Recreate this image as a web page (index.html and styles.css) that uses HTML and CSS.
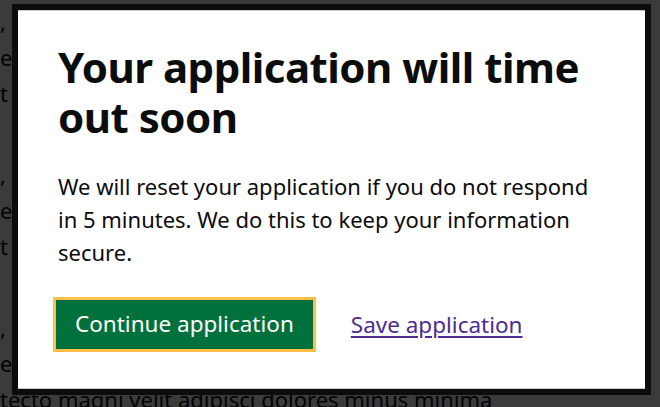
FILE: index.html
```html
<!DOCTYPE html>
<html lang="en">
<head>
<meta charset="UTF-8">
<meta name="viewport" content="width=device-width, initial-scale=1.0">
<title>Application timeout</title>
<link rel="stylesheet" href="styles.css">
</head>
<body>
<main class="page">
  <p class="page-text">, sed do eiusmod tempor incididunt ut labore et dolore<br>erat volutpat. Ut enim ad minim veniam, quis nostrud<br>t laboris nisi ut aliquip ex ea commodo consequat.</p>
  <p class="page-text">, quis autem vel eum iure reprehenderit qui in ea<br>er voluptate velit esse quam nihil molestiae<br>t illum qui dolorem eum fugiat quo voluptas nulla.</p>
  <p class="page-text">, nemo enim ipsam voluptatem quia voluptas sit<br>er aut odit aut fugit, sed quia consequuntur magni<br>tecto magni velit adipisci dolores minus minima</p>
</main>

<div class="overlay"></div>

<div class="modal" role="dialog" aria-labelledby="modal-title">
  <h1 id="modal-title" class="modal-title">Your application will time out soon</h1>
  <p class="modal-text">We will reset your application if you do not respond in 5 minutes. We do this to keep your information secure.</p>
  <div class="modal-actions">
    <button class="btn-continue">Continue application</button>
    <a href="#" class="link-save">Save application</a>
  </div>
</div>
</body>
</html>
```

FILE: styles.css
```css
body{margin:0;font-family:'Noto Sans',sans-serif;background:#fff;color:#0b0c0c;overflow:hidden;height:407px;}
.page{padding-top:3px;}
.page-text{margin:0 0 45px;font-size:22px;line-height:36px;white-space:nowrap;}
.overlay{position:fixed;inset:0;background:rgba(0,0,0,0.77);}
.modal{position:fixed;top:4px;left:12px;right:9px;bottom:12px;background:#fff;border:6px solid #0b0c0c;box-shadow:inset 0 1px #c8c8c8,inset 0 -1px #c8c8c8;padding:0 40px;box-sizing:border-box;}
.modal-title{margin:32px 0 0;font-size:42px;line-height:50px;font-weight:700;letter-spacing:-0.5px;}
.modal-text{margin:28px 0 0;font-size:22px;line-height:33px;}
.modal-actions{display:flex;align-items:center;gap:38px;margin-top:31px;}
.btn-continue{font-family:inherit;font-size:22.5px;line-height:28px;color:#fff;background:#00703c;border:none;padding:10px 19px 11px;margin-left:-2px;outline:3px solid #ffbf47;cursor:pointer;}
.link-save{font-size:22.5px;color:#4c2c92;text-decoration:underline;text-underline-offset:3px;}
```
